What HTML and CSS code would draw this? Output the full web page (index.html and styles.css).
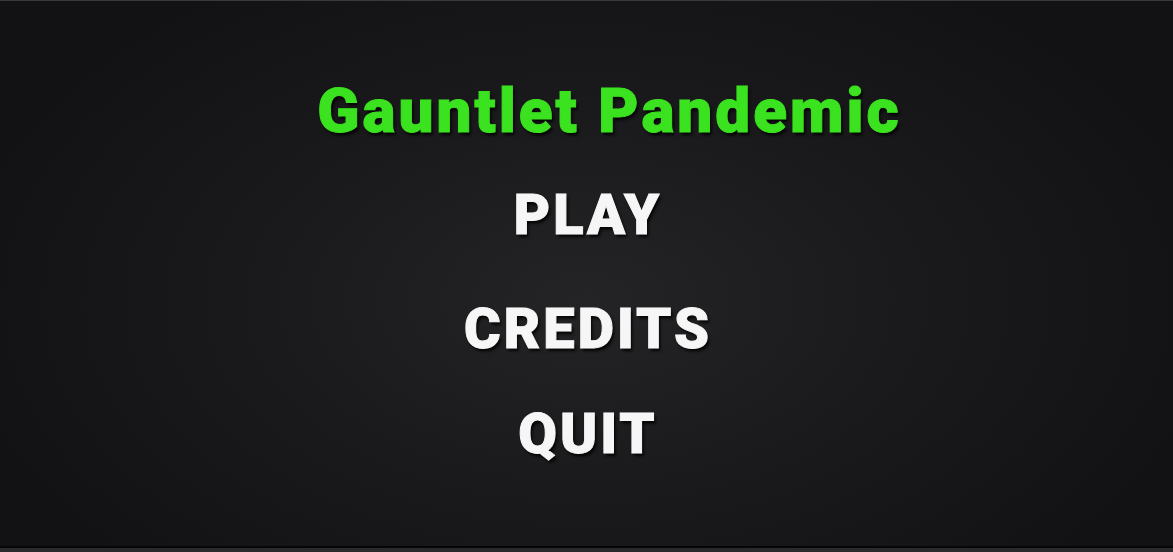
FILE: index.html
```html
<!DOCTYPE html>
<html>
<head>
<meta charset="utf-8">
<link rel="stylesheet" href="styles.css">
</head>
<body>
<div class="screen">
  <main class="menu">
    <h1 class="title">Gauntlet Pandemic</h1>
    <nav class="items">
      <div class="item item-play">PLAY</div>
      <div class="item item-credits">CREDITS</div>
      <div class="item">QUIT</div>
    </nav>
  </main>
  <div class="bottom-bar"></div>
</div>
</body>
</html>
```
FILE: styles.css
```css
html, body {
  margin: 0;
  padding: 0;
  width: 1173px;
  height: 552px;
  overflow: hidden;
  background: #121214;
}
.screen {
  width: 1173px;
  height: 552px;
  display: flex;
  flex-direction: column;
  border-top: 1px solid #3a3a3c;
  box-sizing: border-box;
}
.menu {
  flex: 1;
  display: flex;
  flex-direction: column;
  align-items: center;
  background: radial-gradient(ellipse 55% 70% at 50% 55%, #242426 0%, #1a1a1c 50%, #121214 100%);
  border-bottom: 2px solid #060607;
  font-family: Roboto, "Liberation Sans", sans-serif;
}
.title {
  margin: 80px 0 0 46px;
  font-size: 62px;
  font-weight: 900;
  letter-spacing: 3px;
  color: #3be21f;
  -webkit-text-stroke: 1px #3be21f;
  line-height: 60px;
  text-shadow: 2px 3px 3px rgba(0,0,0,0.85);
}
.items {
  display: flex;
  flex-direction: column;
  align-items: center;
  margin-top: 46px;
  padding-left: 3px;
}
.item {
  font-size: 56px;
  font-weight: 900;
  letter-spacing: 3px;
  color: #f6f6f6;
  -webkit-text-stroke: 1px #f6f6f6;
  line-height: 56px;
  text-shadow: 2px 3px 3px rgba(0,0,0,0.85);
}
.item-play {
  margin-bottom: 58px;
}
.item-credits {
  margin-bottom: 49px;
}
.bottom-bar {
  height: 4px;
  background: #2a2a2c;
}
```
